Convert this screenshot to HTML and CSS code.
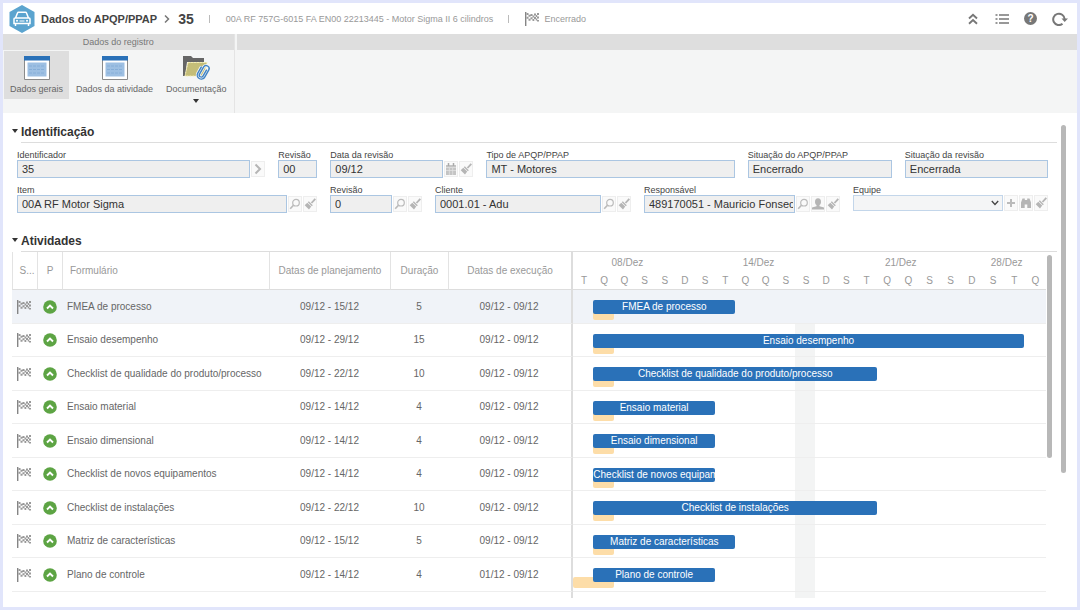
FILE: index.html
```html
<!DOCTYPE html>
<html lang="pt-BR">
<head>
    <meta charset="UTF-8">
    <meta name="viewport" content="width=device-width, initial-scale=1.0">
    <title>Dados do APQP/PPAP</title>
    <link rel="stylesheet" href="styles.css">
</head>
<body>
    <!-- Shared icons -->
    <svg class="sprite" aria-hidden="true">
        <symbol id="flag" viewBox="0 0 14 14">
            <path d="M.7 0v14" stroke="#858585" stroke-width="1.4"/>
            <path d="M1.5 1h2v2h-2zM5.500 2h2v2h-2zM9 1.500h2v2H9zM12 1h2v2h-2zM3.500 2.700h2v2h-2zM7.500 3.500h1.800v2H7.500zM10.700 3h1.500v2h-1.500zM1.500 4.700h2v2h-2zM5.500 5.300h2v2h-2zM9 5h2v2H9zM12 4.500h2v2h-2zM3.500 6.700h2v2h-2zM7.500 7h1.800v2H7.500zM10.700 6.500h1.500v2h-1.500zM12 8h2v1.500h-2z" fill="#999"/>
        </symbol>
        <symbol id="up" viewBox="0 0 14 14">
            <circle cx="7" cy="7" r="6.800" fill="#5da444"/>
            <path d="M4 8.500l3-3 3 3" fill="none" stroke="#fff" stroke-width="1.900"/>
        </symbol>
        <symbol id="search" viewBox="0 0 12 12">
            <circle cx="7" cy="4.700" r="3.300" fill="none" stroke="#bbb" stroke-width="1.200"/>
            <path d="M4.500 7.200L1.200 10.800" stroke="#bbb" stroke-width="1.700"/>
        </symbol>
        <symbol id="brush" viewBox="0 0 12 12">
            <path d="M11.300.8L7.500 5" stroke="#b5b5b5" stroke-width="1.800"/>
            <path d="M4.800 3.200l4 4-1 1-4-4zM3.300 4.700l3.900 3.900-2.200 2.900L.7 7.200z" fill="#b5b5b5"/>
        </symbol>
        <symbol id="window" viewBox="0 0 26 24">
            <path d="M.5.500h25v23H.5z" fill="#fff" stroke="#8a8a8a"/>
            <path d="M0 0h26v4.500H0z" fill="#2a71b8"/>
            <path d="M3.500 6.500h19v14h-19z" fill="#9dbfe2"/>
            <path d="M5 10h16M5 13.500h16M5 17h16" stroke="#86aed8" stroke-dasharray="3 1"/>
        </symbol>
    </svg>

    <header class="topbar">
        <svg class="logo" viewBox="0 0 26 28">
            <path d="M13 0l12.500 7v14L13 28 .5 21V7z" fill="#5ba4cf"/>
            <path d="M6.500 13l2-5q.3-.7 1-.7h7q.7 0 1 .7l2 5M6 13h14q1 0 1 1v4.500H5V14q0-1 1-1zM6.500 18.500V21M19.500 18.500V21" fill="none" stroke="#fff" stroke-width="1.500"/>
            <circle cx="8" cy="15.800" r="1" fill="#fff"/>
            <circle cx="18" cy="15.800" r="1" fill="#fff"/>
            <path d="M10.500 16h5" stroke="#fff"/>
        </svg>
        <h1>Dados do APQP/PPAP</h1>
        <svg class="crumb" viewBox="0 0 6 8"><path d="M1 .5L4.500 4 1 7.500" fill="none" stroke="#777" stroke-width="1.500"/></svg>
        <strong class="record">35</strong>
        <span class="bar"></span>
        <span class="subtitle">00A RF 757G-6015 FA EN00 22213445 - Motor Sigma II 6 cilindros</span>
        <span class="bar"></span>
        <span class="status"><svg class="flag"><use href="#flag"/></svg>Encerrado</span>
        <div class="tools">
            <button aria-label="Recolher"><svg viewBox="0 0 14 14"><path d="M3 6.500L7 2.800l4 3.700M3 11.800l4-3.700 4 3.700" fill="none" stroke="#777" stroke-width="1.900"/></svg></button>
            <button aria-label="Lista"><svg viewBox="0 0 14 14"><path d="M.5 3h2M.5 7h2M.5 11h2M4 3h10M4 7h10M4 11h10" stroke="#777" stroke-width="1.700"/></svg></button>
            <button class="help" aria-label="Ajuda">?</button>
            <button aria-label="Atualizar"><svg viewBox="0 0 16 14"><path d="M10.500 11.800A5.700 5.700 0 1 1 12.600 7" fill="none" stroke="#777" stroke-width="2"/><path d="M9.500 6.500H16L12.700 10z" fill="#777"/></svg></button>
        </div>
    </header>

    <nav class="ribbon">
        <div class="group">
            <div class="group-title">Dados do registro</div>
            <div class="group-items">
                <button class="active"><svg><use href="#window"/></svg>Dados gerais</button>
                <button><svg><use href="#window"/></svg>Dados da atividade</button>
                <button>
                    <svg viewBox="0 0 26 24">
                        <path d="M0 0h8l2 2h11v4H4L2 20H0z" fill="#666"/>
                        <path d="M5 6.500h19l-3.500 13.500H2z" fill="#c4bd78" stroke="#f5edb0" stroke-dasharray="2 1"/>
                        <g transform="rotate(30 20 16)" fill="none" stroke="#3f83c5" stroke-width="1.400">
                            <path d="M16 12v7.500a4 4 0 0 0 8 0v-8a3 3 0 0 0-6 0v8a2 2 0 0 0 4 0V12" stroke="#f4f5f5" stroke-width="3"/>
                            <path d="M16 12v7.500a4 4 0 0 0 8 0v-8a3 3 0 0 0-6 0v8a2 2 0 0 0 4 0V12"/>
                        </g>
                    </svg>
                    Documentação
                    <span class="caret"></span>
                </button>
            </div>
        </div>
        <div class="group rest"><div class="group-title"></div></div>
    </nav>

    <main>
        <div class="content">
            <section class="identification">
                <h2><button class="toggle" aria-label="Recolher seção"><span class="caret"></span></button><span class="heading">Identificação</span></h2>
                <form>
                    <div class="fields first">
                        <div class="field">
                            <label for="identificador">Identificador</label>
                            <div class="control"><input id="identificador" value="35" readonly><button type="button" aria-label="Abrir"><svg viewBox="0 0 12 12"><path d="M3.500 1.500L8 6l-4.500 4.500" fill="none" stroke="#b5b5b5" stroke-width="2"/></svg></button></div>
                        </div>
                        <div class="field">
                            <label for="revisao">Revisão</label>
                            <div class="control"><input id="revisao" value="00" readonly></div>
                        </div>
                        <div class="field">
                            <label for="data">Data da revisão</label>
                            <div class="control"><input id="data" value="09/12" readonly><button type="button" aria-label="Calendário"><svg viewBox="0 0 12 12"><path d="M1 2h10v10H1z" fill="#c4c4c4"/><path d="M3.500 0v3M8.500 0v3" stroke="#aaa" stroke-width="1.500"/><path d="M1 4.500h10M1 7.500h10M4.300 5v7M7.700 5v7" stroke="#e5e5e5" stroke-width=".7"/></svg></button><button type="button" aria-label="Limpar"><svg viewBox="0 0 12 12"><use href="#brush"/></svg></button></div>
                        </div>
                        <div class="field">
                            <label for="tipo">Tipo de APQP/PPAP</label>
                            <div class="control"><input id="tipo" value="MT - Motores" readonly></div>
                        </div>
                        <div class="field">
                            <label for="situacao">Situação do APQP/PPAP</label>
                            <div class="control"><input id="situacao" value="Encerrado" readonly></div>
                        </div>
                        <div class="field">
                            <label for="situacao-revisao">Situação da revisão</label>
                            <div class="control"><input id="situacao-revisao" value="Encerrada" readonly></div>
                        </div>
                    </div>
                    <div class="fields second">
                        <div class="field">
                            <label for="item">Item</label>
                            <div class="control"><input id="item" value="00A RF Motor Sigma" readonly><button type="button" aria-label="Pesquisar"><svg viewBox="0 0 12 12"><use href="#search"/></svg></button><button type="button" aria-label="Limpar"><svg viewBox="0 0 12 12"><use href="#brush"/></svg></button></div>
                        </div>
                        <div class="field">
                            <label for="item-revisao">Revisão</label>
                            <div class="control"><input id="item-revisao" value="0" readonly><button type="button" aria-label="Pesquisar"><svg viewBox="0 0 12 12"><use href="#search"/></svg></button><button type="button" aria-label="Limpar"><svg viewBox="0 0 12 12"><use href="#brush"/></svg></button></div>
                        </div>
                        <div class="field">
                            <label for="cliente">Cliente</label>
                            <div class="control"><input id="cliente" value="0001.01 - Adu" readonly><button type="button" aria-label="Pesquisar"><svg viewBox="0 0 12 12"><use href="#search"/></svg></button><button type="button" aria-label="Limpar"><svg viewBox="0 0 12 12"><use href="#brush"/></svg></button></div>
                        </div>
                        <div class="field">
                            <label for="responsavel">Responsável</label>
                            <div class="control"><input id="responsavel" value="489170051 - Mauricio Fonseca" readonly><button type="button" aria-label="Pesquisar"><svg viewBox="0 0 12 12"><use href="#search"/></svg></button><button type="button" aria-label="Usuário"><svg viewBox="0 0 12 12"><ellipse cx="6" cy="3.800" rx="3" ry="3.500" fill="#b5b5b5"/><path d="M4.500 6h3v2.200L12 9.500v2H0v-2l4.500-1.300z" fill="#b5b5b5"/></svg></button><button type="button" aria-label="Limpar"><svg viewBox="0 0 12 12"><use href="#brush"/></svg></button></div>
                        </div>
                        <div class="field">
                            <label for="equipe">Equipe</label>
                            <div class="control"><span class="select"><select id="equipe"><option></option></select><svg viewBox="0 0 8 6"><path d="M.8 1L4 4.500 7.200 1" fill="none" stroke="#444" stroke-width="1.300"/></svg></span><button type="button" aria-label="Adicionar"><svg viewBox="0 0 12 12"><path d="M6 2v8M2 6h8" stroke="#bbb" stroke-width="2"/></svg></button><button type="button" aria-label="Localizar"><svg viewBox="0 0 12 12"><path d="M2.500 1.500h2.300V3h2.400V1.500h2.300l1.500 4V11H7.300V7.500H4.700V11H1V5.500z" fill="#b5b5b5"/></svg></button><button type="button" aria-label="Limpar"><svg viewBox="0 0 12 12"><use href="#brush"/></svg></button></div>
                        </div>
                    </div>
                </form>
            </section>

            <section>
                <h2><button class="toggle" aria-label="Recolher seção"><span class="caret"></span></button><span class="heading">Atividades</span></h2>
                <div class="activities">
                    <table>
                        <colgroup>
                            <col class="col-status"><col class="col-priority"><col class="col-form"><col class="col-plan"><col class="col-duration"><col class="col-run"><col>
                        </colgroup>
                        <thead>
                            <tr>
                                <th>S...</th>
                                <th>P</th>
                                <th class="form">Formulário</th>
                                <th>Datas de planejamento</th>
                                <th>Duração</th>
                                <th>Datas de execução</th>
                                <th class="timeline">
                                    <div class="scale weeks"><span class="w1">08/Dez</span><span class="w2">14/Dez</span><span class="w3">21/Dez</span><span class="w4">28/Dez</span></div>
                                    <div class="scale"><span>T</span><span>Q</span><span>Q</span><span>S</span><span>S</span><span>D</span><span>S</span><span>T</span><span>Q</span><span>Q</span><span>S</span><span>S</span><span>D</span><span>S</span><span>T</span><span>Q</span><span>Q</span><span>S</span><span>S</span><span>D</span><span>S</span><span>T</span><span>Q</span></div>
                                </th>
                            </tr>
                        </thead>
                        <tbody>
                            <tr class="selected">
                                <td><svg class="flag"><use href="#flag"/></svg></td>
                                <td><svg class="up"><use href="#up"/></svg></td>
                                <td class="form">FMEA de processo</td>
                                <td>09/12 - 15/12</td>
                                <td>5</td>
                                <td>09/12 - 09/12</td>
                                <td class="gantt"><div class="plan" style="margin-left: 4.3%; width: 30%">FMEA de processo</div><div class="done" style="margin-left: 4.3%; width: 4.4%"></div></td>
                            </tr>
                            <tr>
                                <td><svg class="flag"><use href="#flag"/></svg></td>
                                <td><svg class="up"><use href="#up"/></svg></td>
                                <td class="form">Ensaio desempenho</td>
                                <td>09/12 - 29/12</td>
                                <td>15</td>
                                <td>09/12 - 09/12</td>
                                <td class="gantt"><div class="plan" style="margin-left: 4.3%; width: 91%">Ensaio desempenho</div><div class="done" style="margin-left: 4.3%; width: 4.4%"></div></td>
                            </tr>
                            <tr>
                                <td><svg class="flag"><use href="#flag"/></svg></td>
                                <td><svg class="up"><use href="#up"/></svg></td>
                                <td class="form">Checklist de qualidade do produto/processo</td>
                                <td>09/12 - 22/12</td>
                                <td>10</td>
                                <td>09/12 - 09/12</td>
                                <td class="gantt"><div class="plan" style="margin-left: 4.3%; width: 60%">Checklist de qualidade do produto/processo</div><div class="done" style="margin-left: 4.3%; width: 4.4%"></div></td>
                            </tr>
                            <tr>
                                <td><svg class="flag"><use href="#flag"/></svg></td>
                                <td><svg class="up"><use href="#up"/></svg></td>
                                <td class="form">Ensaio material</td>
                                <td>09/12 - 14/12</td>
                                <td>4</td>
                                <td>09/12 - 09/12</td>
                                <td class="gantt"><div class="plan" style="margin-left: 4.3%; width: 25.7%">Ensaio material</div><div class="done" style="margin-left: 4.3%; width: 4.4%"></div></td>
                            </tr>
                            <tr>
                                <td><svg class="flag"><use href="#flag"/></svg></td>
                                <td><svg class="up"><use href="#up"/></svg></td>
                                <td class="form">Ensaio dimensional</td>
                                <td>09/12 - 14/12</td>
                                <td>4</td>
                                <td>09/12 - 09/12</td>
                                <td class="gantt"><div class="plan" style="margin-left: 4.3%; width: 25.7%">Ensaio dimensional</div><div class="done" style="margin-left: 4.3%; width: 4.4%"></div></td>
                            </tr>
                            <tr>
                                <td><svg class="flag"><use href="#flag"/></svg></td>
                                <td><svg class="up"><use href="#up"/></svg></td>
                                <td class="form">Checklist de novos equipamentos</td>
                                <td>09/12 - 14/12</td>
                                <td>4</td>
                                <td>09/12 - 09/12</td>
                                <td class="gantt"><div class="plan" style="margin-left: 4.3%; width: 25.7%">Checklist de novos equipamentos</div><div class="done" style="margin-left: 4.3%; width: 4.4%"></div></td>
                            </tr>
                            <tr>
                                <td><svg class="flag"><use href="#flag"/></svg></td>
                                <td><svg class="up"><use href="#up"/></svg></td>
                                <td class="form">Checklist de instalações</td>
                                <td>09/12 - 22/12</td>
                                <td>10</td>
                                <td>09/12 - 09/12</td>
                                <td class="gantt"><div class="plan" style="margin-left: 4.3%; width: 60%">Checklist de instalações</div><div class="done" style="margin-left: 4.3%; width: 4.4%"></div></td>
                            </tr>
                            <tr>
                                <td><svg class="flag"><use href="#flag"/></svg></td>
                                <td><svg class="up"><use href="#up"/></svg></td>
                                <td class="form">Matriz de características</td>
                                <td>09/12 - 15/12</td>
                                <td>5</td>
                                <td>09/12 - 09/12</td>
                                <td class="gantt"><div class="plan" style="margin-left: 4.3%; width: 30%">Matriz de características</div><div class="done" style="margin-left: 4.3%; width: 4.4%"></div></td>
                            </tr>
                            <tr>
                                <td><svg class="flag"><use href="#flag"/></svg></td>
                                <td><svg class="up"><use href="#up"/></svg></td>
                                <td class="form">Plano de controle</td>
                                <td>09/12 - 14/12</td>
                                <td>4</td>
                                <td>01/12 - 09/12</td>
                                <td class="gantt"><div class="plan" style="margin-left: 4.3%; width: 25.7%">Plano de controle</div><div class="done" style="margin-left: 0%; width: 8.7%"></div></td>
                            </tr>
                        </tbody>
                        <tfoot>
                            <tr><td></td><td></td><td></td><td></td><td></td><td></td><td class="gantt"></td></tr>
                        </tfoot>
                    </table>
                    <div class="scrollbar inner"></div>
                </div>
            </section>
        </div>
        <div class="scrollbar outer"></div>
    </main>
</body>
</html>
```
FILE: styles.css
```css
* {
    box-sizing: border-box;
}

body {
    display: flex;
    flex-direction: column;
    min-height: 100vh;
    margin: 0;
    border: 3px solid #e1e5fb;
    background-color: #fff;
    color: #666;
    font-family: "Liberation Sans", Arial, sans-serif;
    font-size: 10px;
    line-height: 12px;
}

button {
    padding: 0;
    border: none;
    background: none;
    color: inherit;
    font: inherit;
    cursor: pointer;
}

svg {
    display: block;
    flex: none;
}

.sprite {
    display: none;
}

.flag,
.up {
    width: 14px;
    height: 14px;
}

.caret {
    display: block;
    border: 3px solid transparent;
    border-top: 4px solid #333;
    border-bottom: none;
}

/* Top bar */
.topbar {
    display: flex;
    align-items: center;
    height: 31px;
    padding: 0 4px 0 6px;
    color: #999;
}

.logo {
    width: 26px;
    height: 28px;
    margin-right: 6px;
}

h1 {
    margin: 0;
    color: #444;
    font-size: 11px;
}

.crumb {
    width: 6px;
    height: 8px;
    margin: 0 8px 0 7px;
}

.record {
    color: #444;
    font-size: 14px;
}

.subtitle {
    font-size: 9px;
}

.bar {
    width: 1px;
    height: 8px;
    margin: 0 16px 0 15px;
    background-color: #bbb;
}

.status {
    display: flex;
    align-items: center;
    gap: 5px;
    font-size: 9px;
}

.tools {
    display: flex;
    align-items: center;
    gap: 15px;
    margin-left: auto;
    padding-right: 5px;
}

.tools svg {
    width: 14px;
    height: 14px;
}

.tools button:last-child svg {
    width: 16px;
}

.help {
    width: 13px;
    height: 13px;
    border-radius: 50%;
    background-color: #777;
    color: #fff;
    font-size: 10px;
    font-weight: bold;
}

/* Ribbon */
.ribbon {
    display: flex;
    height: 79px;
    background-color: #f4f5f5;
}

.group {
    border-right: 1px solid #e4e4e4;
}

.group.rest {
    flex: 1;
    border-right: none;
}

.group-title {
    height: 16px;
    background-color: #dedede;
    color: #777;
    font-size: 9px;
    line-height: 16px;
    text-align: center;
}

.rest .group-title {
    border-left: 2px solid #f4f5f5;
}

.group-items {
    display: flex;
    gap: 1px;
    padding: 1px;
}

.group-items button {
    display: flex;
    flex-direction: column;
    align-items: center;
    height: 48px;
    padding: 5px 6px 0;
    font-size: 9px;
    white-space: nowrap;
}

.group-items .active {
    background-color: #dedede;
}

.group-items svg {
    width: 26px;
    height: 24px;
    margin-bottom: 3px;
    overflow: visible;
}

.group-items .caret {
    margin-top: 4px;
}

/* Content */
main {
    display: flex;
    flex: 1;
    gap: 4px;
    padding: 12px 11px 0 9px;
}

.content {
    flex: 1;
    min-width: 0;
}

.scrollbar {
    flex: none;
    border-radius: 3px;
    background-color: #b8b8b8;
}

.outer {
    width: 5px;
    height: 348px;
}

.inner {
    width: 5px;
    height: 203px;
    margin: 3px 5px 0 1px;
}

h2 {
    display: flex;
    align-items: center;
    height: 18px;
    margin: 0;
    color: #333;
    font-size: 12px;
    line-height: 14px;
}

.toggle {
    width: 9px;
    padding: 0 4px 6px 0;
}

.heading {
    flex: 1;
    height: 18px;
    border-bottom: 1px solid #ddd;
}

.identification {
    height: 109px;
}

form {
    padding: 6px 9px 0 5px;
}

.fields {
    display: grid;
    gap: 13px;
    height: 35px;
}

.first {
    grid-template-columns: 248fr 39fr 143fr 248fr 144fr 143fr;
}

.second {
    grid-template-columns: 300fr 92fr 196fr 196fr 195fr;
}

.field {
    min-width: 0;
    color: #444;
}

.field label {
    display: block;
    padding-top: 2px;
    font-size: 9px;
    line-height: 9px;
    white-space: nowrap;
}

.control {
    display: flex;
    align-items: center;
    gap: 1px;
}

.control input {
    flex: 1;
    min-width: 0;
    height: 18px;
    padding: 0 1px 0 4px;
    border: 1px solid #abc6e2;
    background-color: #efefef;
    color: #333;
    font: inherit;
    font-size: 11px;
}

.control button {
    width: 14px;
    height: 16px;
    padding: 1px 0;
    border: 1px solid #eee;
    background-color: #fafafa;
}

.select {
    display: flex;
    flex: 1;
    position: relative;
}

.select select {
    width: 100%;
    height: 16px;
    border: 1px solid #c3d6ea;
    background-color: #f4f5f6;
    appearance: none;
}

/* arrow drawn over the select */
.select svg {
    position: absolute;
    top: 5px;
    right: 4px;
    width: 8px;
    height: 6px;
    pointer-events: none;
}

.control button svg {
    width: 100%;
    height: 12px;
}

/* Activities */
.activities {
    display: flex;
}

table {
    flex: 1;
    width: 100%;
    border-collapse: separate;
    border-spacing: 0;
    table-layout: fixed;
}

.col-status {
    width: 26px;
}

.col-priority {
    width: 25px;
}

.col-form {
    width: 207px;
}

.col-plan {
    width: 121px;
}

.col-duration {
    width: 58px;
}

.col-run {
    width: 124px;
}

th {
    height: 38px;
    padding: 0;
    border-right: 1px solid #e3e3e3;
    border-bottom: 1px solid #ddd;
    color: #999;
    font-weight: normal;
    white-space: nowrap;
}

th:first-child {
    padding-left: 4px;
    border-left: 1px solid #e3e3e3;
}

th.form {
    padding-left: 7px;
    text-align: left;
}

th:nth-child(6),
td:nth-child(6) {
    border-right: 2px solid #ddd;
}

th.timeline {
    padding-left: 1px;
    border-right: none;
    vertical-align: top;
}

.scale {
    display: grid;
    grid-template-columns: repeat(15, 20fr) repeat(8, 21fr);
    padding-top: 3px;
    line-height: 15px;
}

.weeks {
    margin: 0 -3px 0 3px;
}

.weeks span {
    margin: 0 -10px;
}

.w1 {
    grid-column: 3;
}

.w2 {
    grid-column: 9 / span 2;
}

.w3 {
    grid-column: 16 / span 2;
}

.w4 {
    grid-column: 21 / span 2;
}

td {
    height: 34px;
    padding: 0 2px 0 0;
    border-bottom: 1px solid #eee;
    text-align: center;
}

tbody tr:nth-child(even) td {
    height: 33px;
}

td .flag,
td .up {
    margin: 0 auto;
}

td.form {
    padding-left: 4px;
    text-align: left;
}

td.gantt {
    padding: 0;
    background: linear-gradient(#f3f4f4, #f3f4f4) 49% 0 / 20px 100% no-repeat;
    vertical-align: top;
}

tbody .selected td {
    background: #f0f3f8;
}

.plan {
    position: relative;
    height: 14px;
    margin-top: 10px;
    overflow: hidden;
    border-radius: 2px;
    background-color: #2a71b8;
    color: #fff;
    line-height: 13px;
    white-space: nowrap;
}

.done {
    height: 11px;
    margin-top: -5px;
    border-radius: 2px;
    background-color: #fddda8;
}

tfoot td {
    height: 6px;
    border-bottom: none;
}
```
